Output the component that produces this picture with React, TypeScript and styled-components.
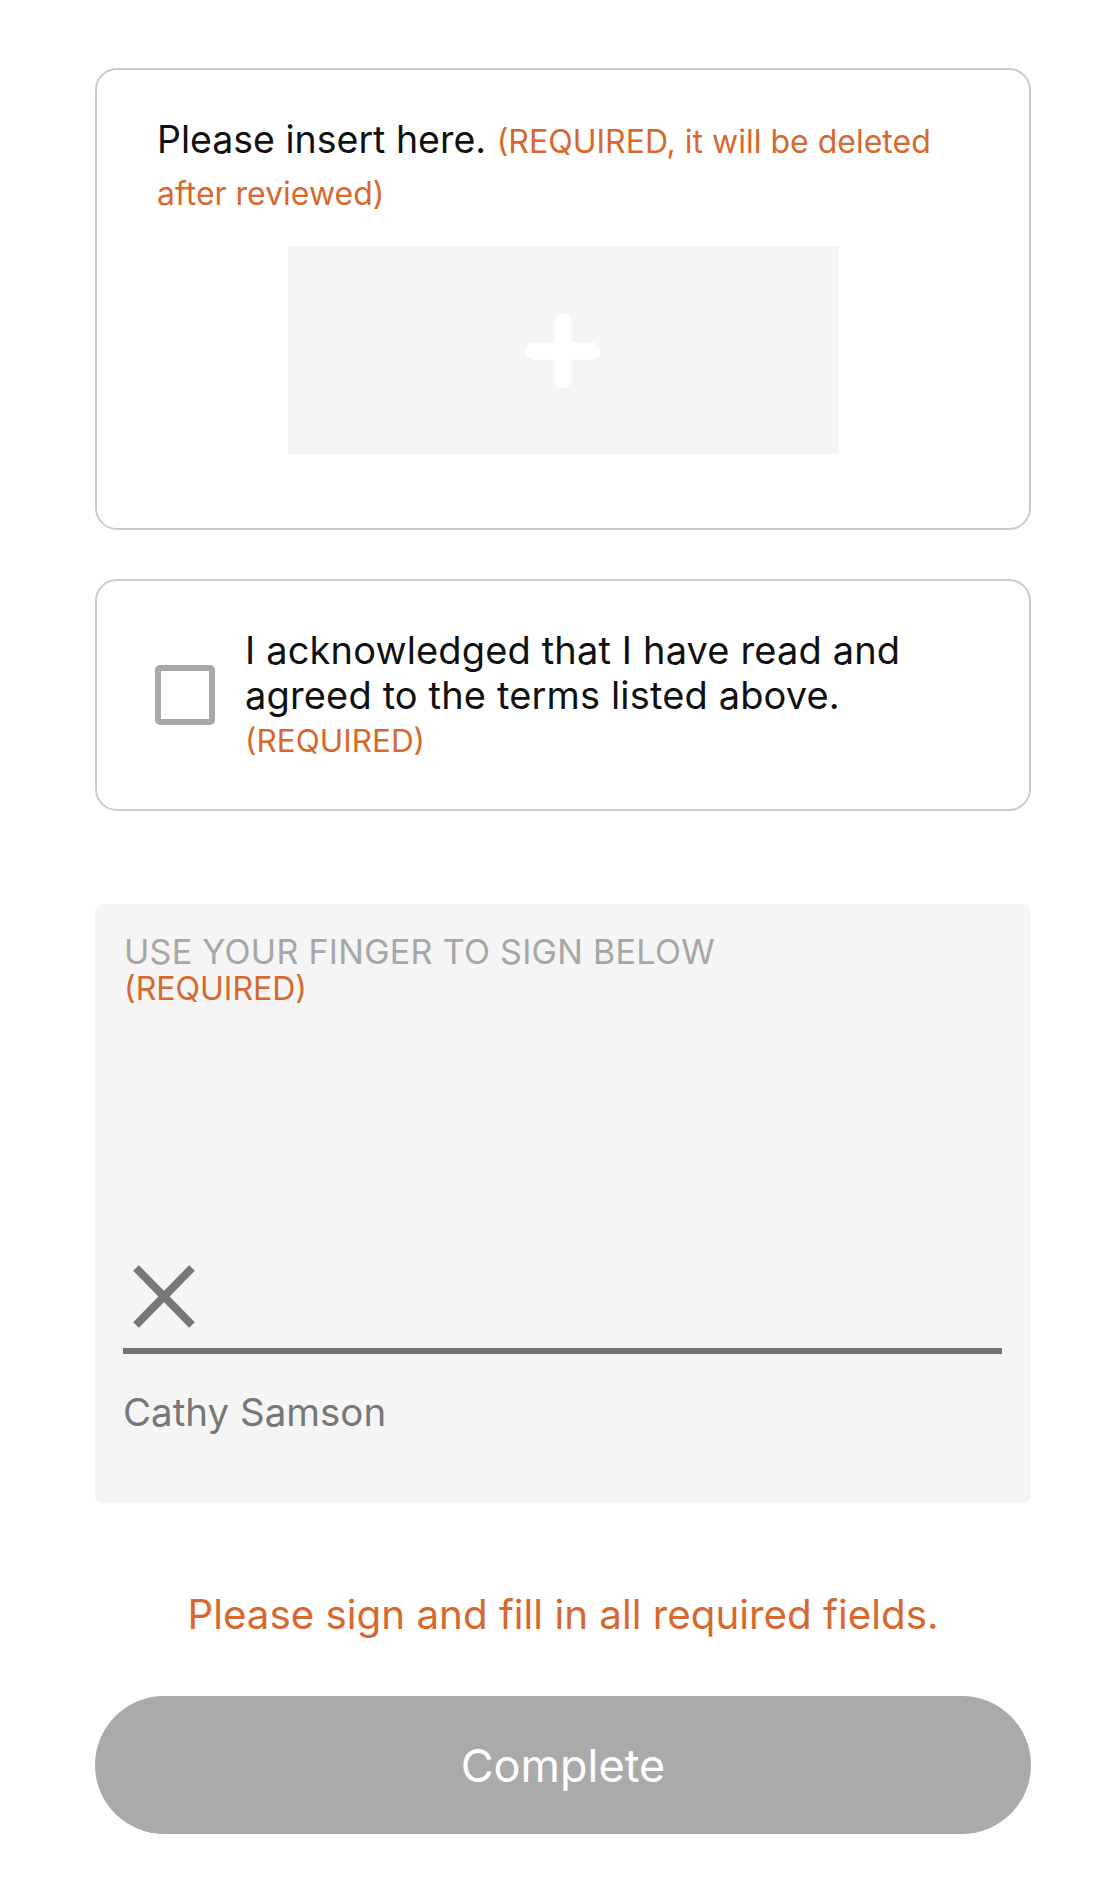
import styled, { createGlobalStyle } from "styled-components";

const GlobalStyle = createGlobalStyle`
  html, body {
    margin: 0;
    padding: 0;
    background: #ffffff;
  }
  body {
    font-family: Inter, "Noto Sans", "Liberation Sans", sans-serif;
    -webkit-font-smoothing: antialiased;
  }
  * {
    box-sizing: border-box;
  }
`;

const orange = "#d6692f";

const Page = styled.main`
  display: flex;
  flex-direction: column;
  width: 936px;
  margin-left: 95px;
  padding: 68px 0 47px;
`;

const Card = styled.section<{ $height: number }>`
  height: ${(p) => p.$height}px;
  border: 2px solid #cbcbcb;
  border-radius: 22px;
  background: #fff;
`;

const UploadCard = styled(Card)`
  padding: 44px 60px 0 60px;
`;

const Prompt = styled.p`
  margin: 0;
  font-size: 37.5px;
  line-height: 52px;
  color: #111;
`;

const Required = styled.span<{ $size: number }>`
  font-size: ${(p) => p.$size}px;
  line-height: 1;
  color: ${orange};
`;

const DropZone = styled.button`
  display: flex;
  align-items: center;
  justify-content: center;
  width: 551px;
  height: 207px;
  margin: 29px auto 0;
  padding: 0;
  border: none;
  background: #f5f5f5;
  cursor: pointer;
`;

const AgreeCard = styled(Card)`
  display: flex;
  align-items: center;
  margin-top: 49px;
  padding-left: 58px;
`;

const CheckBox = styled.span`
  flex: none;
  width: 60px;
  height: 60px;
  border: 6px solid #a8a8a8;
  border-radius: 5px;
`;

const AgreeText = styled.div`
  margin-left: 30px;
  font-size: 38px;
  letter-spacing: 0.15px;
  line-height: 45px;
  color: #111;
`;

const RequiredLine = styled.div<{ $size: number }>`
  font-size: ${(p) => p.$size}px;
  letter-spacing: 0;
  color: ${orange};
`;

const SignPanel = styled.section`
  display: flex;
  flex-direction: column;
  height: 599px;
  margin-top: 93px;
  padding: 29px 29px 0 28px;
  border-radius: 8px;
  background: #f5f5f5;
`;

const SignHint = styled.div`
  font-size: 34px;
  letter-spacing: 0.3px;
  line-height: 37px;
  color: #a6a6a6;
  padding-left: 1px;
`;

const SignMark = styled.svg`
  display: block;
  margin: 258px 0 0 10px;
`;

const SignLine = styled.div`
  height: 6px;
  margin-top: 20px;
  background: #747474;
`;

const SignerName = styled.div`
  margin-top: 34px;
  font-size: 38.5px;
  line-height: 48px;
  color: #777;
`;

const ErrorText = styled.p`
  margin: 88px 0 0;
  text-align: center;
  font-size: 40.3px;
  line-height: 48px;
  color: ${orange};
`;

const CompleteButton = styled.button`
  height: 138px;
  margin-top: 57px;
  border: none;
  border-radius: 69px;
  background: #aaaaaa;
  color: #fff;
  font-family: inherit;
  font-size: 45px;
  cursor: not-allowed;
`;

function PlusIcon() {
  return (
    <svg width="76" height="76" viewBox="0 0 76 76" aria-hidden="true">
      <g stroke="#ffffff" strokeWidth="17" strokeLinecap="round">
        <line x1="38" y1="9" x2="38" y2="67" />
        <line x1="9" y1="38" x2="67" y2="38" />
      </g>
    </svg>
  );
}

export default function App() {
  return (
    <>
      <GlobalStyle />
      <Page>
        <UploadCard $height={462}>
          <Prompt>
            Please insert here.{" "}
            <Required $size={32}>(REQUIRED, it will be deleted after reviewed)</Required>
          </Prompt>
          <DropZone aria-label="Add image">
            <PlusIcon />
          </DropZone>
        </UploadCard>

        <AgreeCard $height={232}>
          <CheckBox role="checkbox" aria-checked="false" />
          <AgreeText>
            I acknowledged that I have read and
            <br />
            agreed to the terms listed above.
            <RequiredLine $size={31.5}>(REQUIRED)</RequiredLine>
          </AgreeText>
        </AgreeCard>

        <SignPanel>
          <SignHint>
            USE YOUR FINGER TO SIGN BELOW
            <RequiredLine $size={32}>(REQUIRED)</RequiredLine>
          </SignHint>
          <SignMark width="62" height="63" viewBox="0 0 62 63" aria-hidden="true">
            <g stroke="#777777" strokeWidth="8" strokeLinecap="butt">
              <line x1="3" y1="3" x2="59" y2="60" />
              <line x1="59" y1="3" x2="3" y2="60" />
            </g>
          </SignMark>
          <SignLine />
          <SignerName>Cathy Samson</SignerName>
        </SignPanel>

        <ErrorText>Please sign and fill in all required fields.</ErrorText>
        <CompleteButton disabled>Complete</CompleteButton>
      </Page>
    </>
  );
}
